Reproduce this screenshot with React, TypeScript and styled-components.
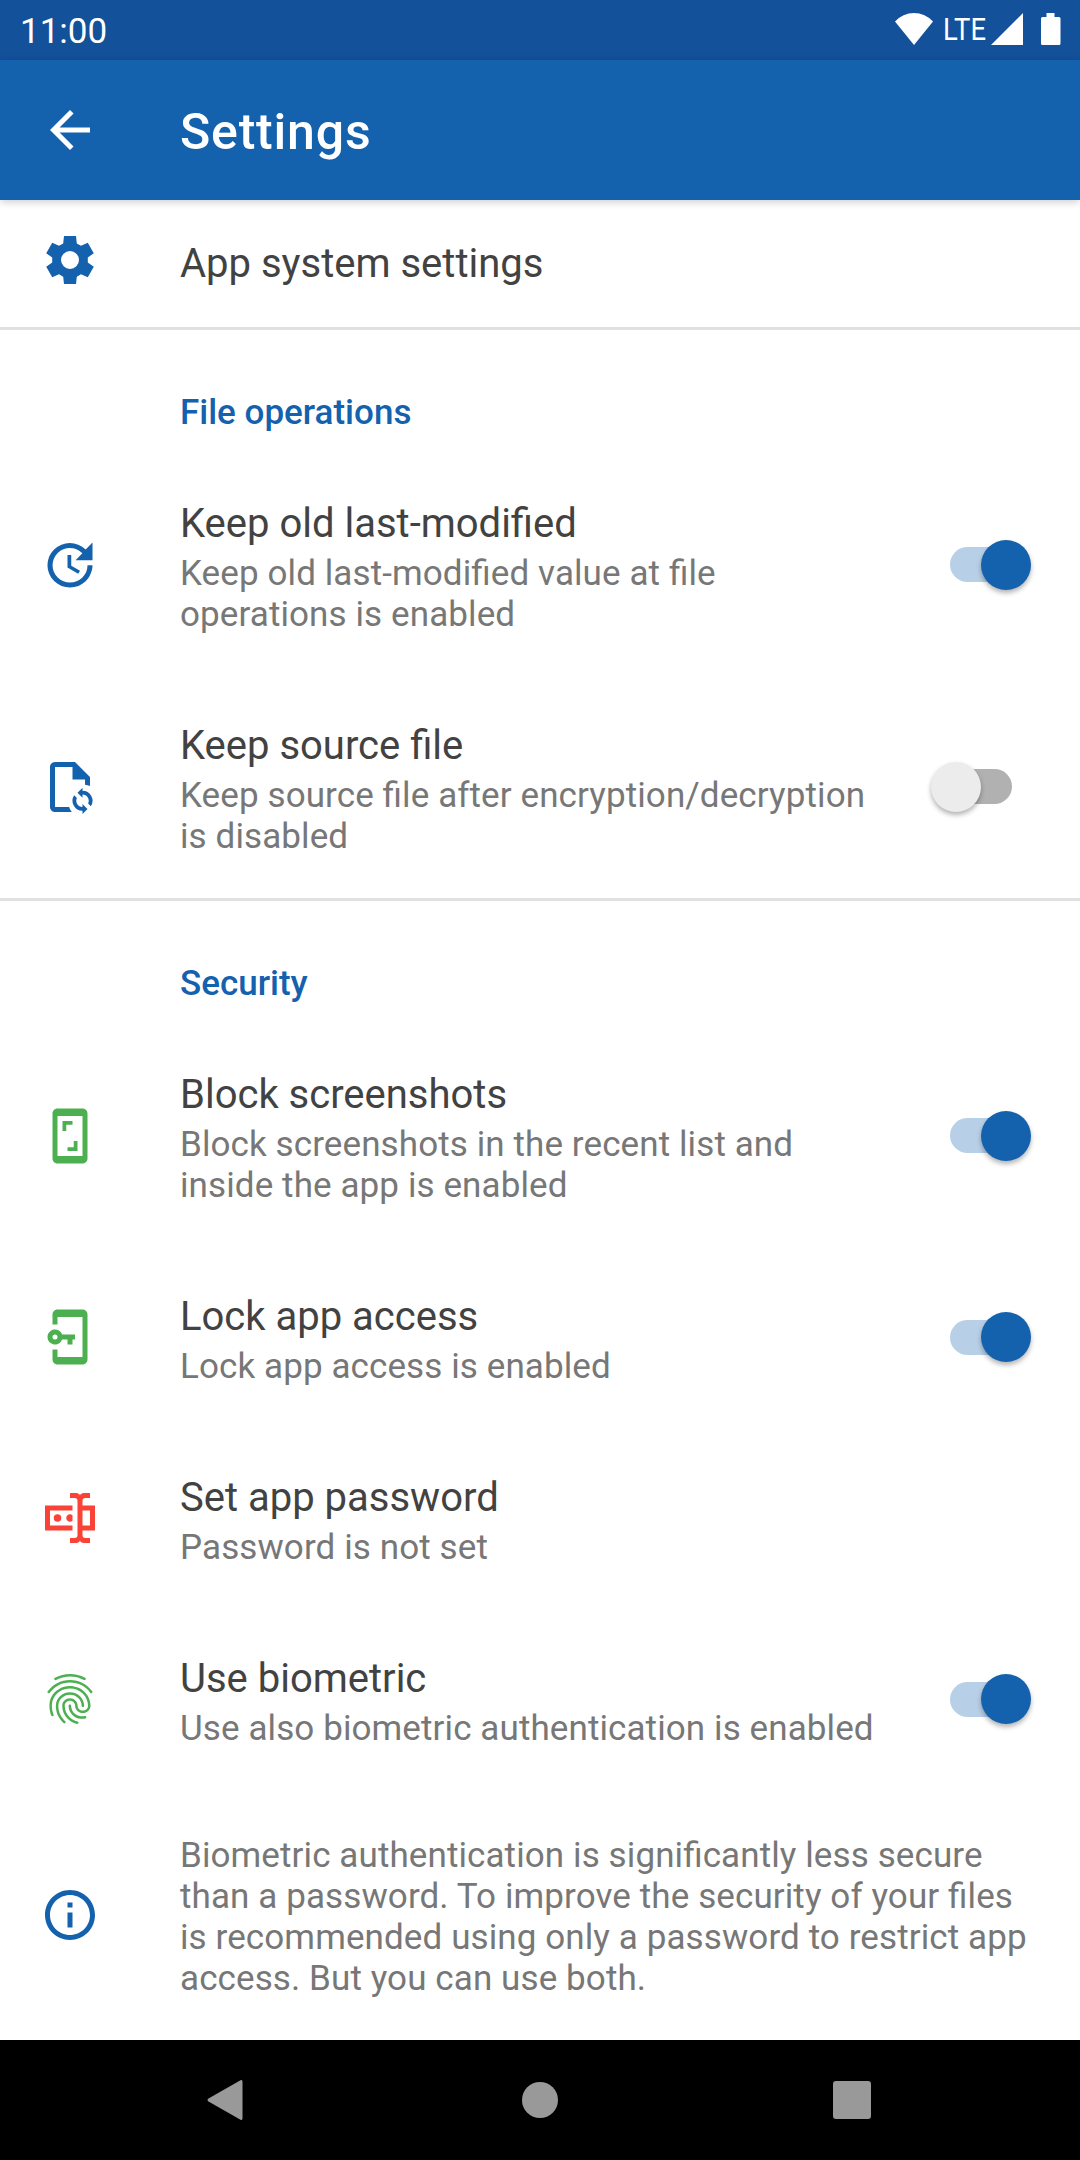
import React from "react";
import styled, { createGlobalStyle, css } from "styled-components";

const BLUE = "#1461ae";
const GREEN = "#4caf50";
const RED = "#fb4236";

const Global = createGlobalStyle`
  * { box-sizing: border-box; }
  body { margin: 0; background: #fff; font-family: Roboto, sans-serif; }
`;

const Screen = styled.div`
  width: 1080px;
  height: 2160px;
  display: flex;
  flex-direction: column;
  overflow: hidden;
  background: #fff;
`;

const StatusBar = styled.header`
  height: 60px;
  flex: none;
  display: flex;
  align-items: center;
  justify-content: space-between;
  padding-left: 20px;
  background: #13519b;
  color: #fff;
`;

const Clock = styled.span`
  font-size: 35px;
  line-height: 56px;
  padding-top: 3px;
`;

const StatusIcons = styled.div`
  display: flex;
  align-items: center;
  height: 60px;
`;

const Toolbar = styled.div`
  height: 140px;
  flex: none;
  display: flex;
  align-items: center;
  background: ${BLUE};
  color: #fff;
  box-shadow: 0 2px 8px rgba(0, 0, 0, 0.2);
  position: relative;
`;

const IconCell = styled.div`
  width: 140px;
  flex: none;
  display: flex;
  justify-content: center;
  margin-right: 40px;
`;

const ToolbarTitle = styled.h1`
  margin: 0;
  padding-top: 4px;
  font-size: 50px;
  line-height: 58px;
  font-weight: 500;
  letter-spacing: 0.8px;
`;

const List = styled.main`
  flex: 1;
  min-height: 0;
  overflow: hidden;
`;

/* The first row is scrolled slightly under the toolbar. */
const Row = styled.div<{ $clipped?: boolean }>`
  display: flex;
  align-items: center;
  padding: 40px 0;
  ${(p) => p.$clipped && css`
    height: 133px;
    padding: 0 0 1px;
    margin-top: -6px;
  `}
`;

const Texts = styled.div`
  flex: 1;
  min-width: 0;
`;

const Title = styled.div`
  padding-top: 6px;
  font-size: 40px;
  line-height: 47px;
  color: #424242;
  white-space: nowrap;
`;

const Summary = styled.div`
  padding: 5px 0 2px;
  font-size: 35px;
  line-height: 41px;
  letter-spacing: 0.1px;
  font-feature-settings: "liga" 1;
  color: #777;
  white-space: pre-line;

  ${Title} + & {
    padding: 6px 0 1px;
  }
`;

const Section = styled.section`
  border-top: 3px solid #e0e0e0;
`;

const Heading = styled.h2`
  margin: 0;
  padding: 62px 0 21px 180px;
  font-size: 35px;
  line-height: 41px;
  font-weight: 500;
  color: ${BLUE};
`;

const SwitchCell = styled.div`
  width: 180px;
  flex: none;
  padding: 0 0 1px 50px;
`;

const Track = styled.div<{ $on: boolean }>`
  width: 62px;
  height: 35px;
  border-radius: 18px;
  display: flex;
  align-items: center;
  justify-content: ${(p) => (p.$on ? "flex-end" : "flex-start")};
  background: ${(p) => (p.$on ? "#b8d0e7" : "#b1b1b1")};
`;

const Thumb = styled.div<{ $on: boolean }>`
  width: 50px;
  height: 50px;
  flex: none;
  border-radius: 50%;
  margin: ${(p) => (p.$on ? "0 -19px 0 0" : "0 0 0 -19px")};
  background: ${(p) => (p.$on ? BLUE : "#ececec")};
  box-shadow: 0 3px 5px rgba(0, 0, 0, 0.3);
`;

const NavBar = styled.nav`
  height: 120px;
  flex: none;
  display: flex;
  justify-content: center;
  align-items: center;
  gap: 252px;
  background: #000;
`;

const Icon = styled.svg.attrs({ viewBox: "0 0 24 24", width: 60, height: 60 })`
  display: block;
  flex: none;
`;

const ListIcon = styled(Icon)`
  margin-bottom: 1px;
`;

/* One tooth, repeated every 60 degrees around the hub. */
const TOOTH = [[-2.72, -6.65], [-2.4, -9.6], [2.4, -9.6], [2.72, -6.65]];
const gearPath =
  "M" +
  [0, 1, 2, 3, 4, 5]
    .flatMap((n) => {
      const a = (n * Math.PI) / 3;
      return TOOTH.map(([x, y]) =>
        `${(12 + x * Math.cos(a) - y * Math.sin(a)).toFixed(2)} ${(12 + x * Math.sin(a) + y * Math.cos(a)).toFixed(2)}`
      );
    })
    .join("L") +
  "ZM12 8.400a3.600 3.600 0 1 0 0 7.200 3.600 3.600 0 0 0 0-7.200Z";

const GearIcon = () => (
  <Icon fill={BLUE}>
    <path fillRule="evenodd" d={gearPath} />
  </Icon>
);

const UpdateIcon = () => (
  <ListIcon fill={BLUE}>
    <path d="M21 10.120h-6.780l2.740-2.820c-2.730-2.700-7.150-2.800-9.880-.1-2.730 2.710-2.730 7.080 0 9.790s7.150 2.710 9.880 0C18.320 15.650 19 14.080 19 12.100h2c0 1.980-.88 4.550-2.640 6.290-3.510 3.480-9.210 3.480-12.720 0-3.500-3.470-3.530-9.110-.02-12.580s9.140-3.470 12.650 0L21 3v7.120zM12.500 8v4.250l3.500 2.080-.72 1.210L11 13V8h1.500z" />
  </ListIcon>
);

const FileSyncIcon = () => (
  <ListIcon fill={BLUE}>
    <path d="M14 2H6C4.900 2 4 2.900 4 4v16c0 1.100.9 2 2 2h6.700c-.5-.6-.85-1.270-1.060-2H6V4h7v5h5v2.080c.7.080 1.370.26 2 .52V8l-6-6z" />
    <path d="M17 12.250v1.250a4 4 0 0 1 3.330 6.210l-1.090-1.090A2.500 2.500 0 0 0 17 15v1.250l-2-2 2-2zM17 22.750v-1.250a4 4 0 0 1-3.330-6.210l1.090 1.090A2.500 2.500 0 0 0 17 20v-1.250l2 2-2 2z" />
  </ListIcon>
);

const PhoneCropIcon = () => (
  <ListIcon fill={GREEN}>
    <path fillRule="evenodd" d="M17 1H7c-1.100 0-2 .9-2 2v18c0 1.100.9 2 2 2h10c1.100 0 2-.9 2-2V3c0-1.100-.9-2-2-2zm0 19H7V4h10v16z" />
    <path d="M9 6h4v1.500h-2.500V10H9zM15 18h-4v-1.500h2.500V14H15z" />
  </ListIcon>
);

const PhoneKeyIcon = () => (
  <ListIcon fill={GREEN}>
    <path d="M7 1h10c1.100 0 2 .9 2 2v18c0 1.100-.9 2-2 2H7c-1.100 0-2-.9-2-2v-4h2v3h10V4H7v3H5V3c0-1.100.9-2 2-2z" />
    <path fillRule="evenodd" d="M8.830 11H14v2h-1v2h-2v-2H8.830a3 3 0 1 1 0-2zM6 13a1 1 0 1 0 0-2 1 1 0 0 0 0 2z" />
  </ListIcon>
);

const PasswordIcon = () => (
  <ListIcon fill={RED}>
    <path d="M17 7h5v10h-5v2c0 .55.45 1 1 1h2v2h-2.500c-.55 0-1.500-.45-1.500-1 0 .55-.950 1-1.500 1H12v-2h2c.55 0 1-.45 1-1V5c0-.55-.45-1-1-1h-2V2h2.500c.55 0 1.500.45 1.500 1 0-.55.950-1 1.500-1H20v2h-2c-.55 0-1 .45-1 1v2M2 7h11v2H4v6h9v2H2V7m18 8V9h-3v6h3M8.500 12a1.500 1.500 0 1 1-3 0 1.500 1.500 0 0 1 3 0m4.500-1.110c-.61-.56-1.560-.510-2.120.11-.56.600-.510 1.550.12 2.110.57.520 1.430.520 2 0v-2.220z" />
  </ListIcon>
);

const FingerprintIcon = () => (
  <ListIcon fill={GREEN}>
    <path d="M17.810 4.470c-.08 0-.16-.02-.23-.06C15.660 3.420 14 3 12.010 3c-1.980 0-3.860.47-5.570 1.410-.24.130-.54.040-.68-.2-.130-.24-.040-.550.200-.680C7.820 2.520 9.860 2 12.010 2c2.130 0 3.990.470 6.030 1.520.250.130.340.430.210.670-.090.180-.260.280-.440.280zM3.500 9.720c-.100 0-.200-.030-.290-.090-.230-.160-.280-.470-.120-.700.990-1.400 2.250-2.500 3.750-3.270C9.980 4.040 14 4.030 17.150 5.650c1.500.770 2.760 1.860 3.750 3.250.160.220.110.540-.120.700-.230.160-.540.110-.700-.120-.900-1.260-2.040-2.250-3.390-2.940-2.870-1.470-6.540-1.470-9.400.010-1.360.700-2.500 1.700-3.400 2.960-.080.140-.230.210-.390.210zm6.250 12.070c-.130 0-.260-.050-.350-.150-.870-.870-1.340-1.430-2.010-2.640-.690-1.230-1.050-2.730-1.050-4.340 0-2.970 2.540-5.390 5.660-5.390s5.660 2.420 5.660 5.390c0 .280-.220.500-.500.500s-.500-.220-.500-.500c0-2.420-2.090-4.390-4.660-4.390-2.570 0-4.660 1.970-4.660 4.390 0 1.440.320 2.770.930 3.850.640 1.150 1.080 1.640 1.850 2.420.190.200.190.510 0 .710-.110.100-.240.150-.370.150zm7.170-1.850c-1.190 0-2.240-.300-3.100-.890-1.490-1.010-2.380-2.650-2.380-4.390 0-.280.220-.500.500-.500s.500.220.500.500c0 1.410.720 2.740 1.940 3.560.710.480 1.540.710 2.540.710.240 0 .640-.030 1.040-.100.270-.050.530.130.580.410.050.270-.130.530-.410.580-.570.110-1.070.120-1.210.120zM14.910 22c-.040 0-.090-.010-.130-.020-1.590-.440-2.630-1.030-3.720-2.100-1.400-1.390-2.170-3.240-2.170-5.220 0-1.620 1.380-2.940 3.080-2.940 1.700 0 3.080 1.320 3.080 2.940 0 1.070.930 1.940 2.080 1.940s2.080-.870 2.080-1.940c0-3.770-3.250-6.830-7.250-6.830-2.840 0-5.440 1.580-6.610 4.030-.390.810-.590 1.760-.590 2.800 0 .780.070 2.010.670 3.610.100.260-.030.550-.290.640-.260.100-.550-.040-.640-.290-.490-1.310-.730-2.610-.730-3.960 0-1.200.230-2.290.680-3.240 1.330-2.790 4.280-4.600 7.510-4.600 4.550 0 8.250 3.510 8.250 7.830 0 1.620-1.380 2.940-3.080 2.940s-3.080-1.320-3.080-2.940c0-1.070-.930-1.940-2.080-1.940s-2.080.870-2.080 1.940c0 1.710.660 3.310 1.870 4.510.950.940 1.860 1.460 3.270 1.850.270.070.420.350.350.610-.050.230-.260.380-.470.380z" />
  </ListIcon>
);

const InfoIcon = () => (
  <ListIcon fill={BLUE}>
    <path d="M11 7h2v2h-2zm0 4h2v6h-2zm1-9C6.480 2 2 6.480 2 12s4.480 10 10 10 10-4.480 10-10S17.520 2 12 2zm0 18c-4.410 0-8-3.590-8-8s3.590-8 8-8 8 3.590 8 8-3.590 8-8 8z" />
  </ListIcon>
);

type ItemProps = {
  icon: React.ReactNode;
  title?: string;
  summary?: string;
  checked?: boolean;
  clipped?: boolean;
};

const Item = ({ icon, title, summary, checked, clipped }: ItemProps) => (
  <Row $clipped={clipped}>
    <IconCell>{icon}</IconCell>
    <Texts>
      {title && <Title>{title}</Title>}
      {summary && <Summary>{summary}</Summary>}
    </Texts>
    {checked !== undefined && (
      <SwitchCell>
        <Track $on={checked}>
          <Thumb $on={checked} />
        </Track>
      </SwitchCell>
    )}
  </Row>
);

export default function App() {
  return (
    <Screen>
      <Global />
      <StatusBar>
        <Clock>11:00</Clock>
        <StatusIcons>
          <svg width="186" height="60" viewBox="894 0 186 60" fill="#fff">
            <path d="M895 21.500a25.500 25.500 0 0 1 38 0L914 45z" />
            <text x="943" y="40" fontFamily="Roboto" fontSize="32" textLength="43" lengthAdjust="spacingAndGlyphs">LTE</text>
            <path d="M1023 13v32h-32zM1046.500 13h8v4h4.500q1.500 0 1.500 1.500v25q0 1.500-1.500 1.500h-16.500q-1.500 0-1.500-1.500v-25q0-1.500 1.500-1.500h4z" />
          </svg>
        </StatusIcons>
      </StatusBar>
      <Toolbar>
        <IconCell>
          <Icon fill="#fff">
            <path d="M20 11H7.830l5.590-5.590L12 4l-8 8 8 8 1.410-1.410L7.830 13H20v-2z" />
          </Icon>
        </IconCell>
        <ToolbarTitle>Settings</ToolbarTitle>
      </Toolbar>
      <List>
        <Item clipped icon={<GearIcon />} title="App system settings" />
        <Section>
          <Heading>File operations</Heading>
          <Item icon={<UpdateIcon />} title="Keep old last-modified" summary={"Keep old last-modified value at file\noperations is enabled"} checked />
          <Item icon={<FileSyncIcon />} title="Keep source file" summary={"Keep source file after encryption/decryption\nis disabled"} checked={false} />
        </Section>
        <Section>
          <Heading>Security</Heading>
          <Item icon={<PhoneCropIcon />} title="Block screenshots" summary={"Block screenshots in the recent list and\ninside the app is enabled"} checked />
          <Item icon={<PhoneKeyIcon />} title="Lock app access" summary="Lock app access is enabled" checked />
          <Item icon={<PasswordIcon />} title="Set app password" summary="Password is not set" />
          <Item icon={<FingerprintIcon />} title="Use biometric" summary="Use also biometric authentication is enabled" checked />
          <Item
            icon={<InfoIcon />}
            summary={"Biometric authentication is significantly less secure\nthan a password. To improve the security of your files\nis recommended using only a password to restrict app\naccess. But you can use both."}
          />
        </Section>
      </List>
      <NavBar>
        <svg width="60" height="60" viewBox="0 0 60 60" fill="#999">
          <path d="M42.500 10.300L10.500 28.500q-2 1.500 0 3L42.500 49.700q2 .8 2-1.500V11.800q0-2.300-2-1.500z" />
        </svg>
        <svg width="60" height="60" viewBox="0 0 60 60" fill="#999">
          <circle cx="30" cy="30" r="18" />
        </svg>
        <svg width="60" height="60" viewBox="0 0 60 60" fill="#999">
          <rect x="11" y="11" width="38" height="38" rx="3" />
        </svg>
      </NavBar>
    </Screen>
  );
}
